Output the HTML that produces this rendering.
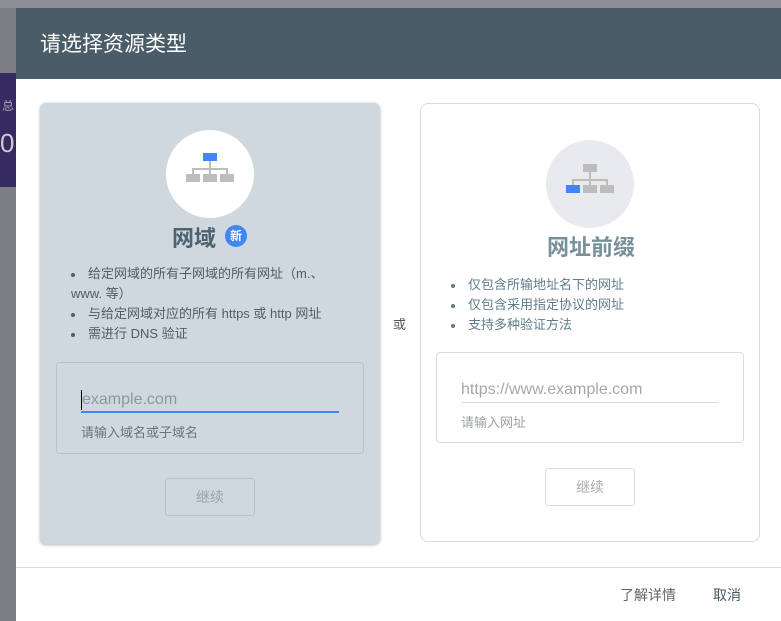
<!DOCTYPE html>
<html><head><meta charset="utf-8"><style>
*{margin:0;padding:0;box-sizing:border-box}
body{width:781px;height:621px;overflow:hidden;background:#7d7f82;font-family:"Liberation Sans","Noto Sans CJK SC",sans-serif;position:relative}
.abs{position:absolute}
.dlg{left:16px;top:8px;width:765px;height:613px;background:#fff}
.hdr{left:0;top:0;width:765px;height:71px;background:#4a5c68;color:#fff;font-size:21px;padding:24px 0 0 24px;line-height:26px}
.card1{left:24px;top:95px;width:340px;height:441px;background:#cfd8de;border-radius:6px;box-shadow:0 1px 3px rgba(0,0,0,.3)}
.card2{left:404px;top:95px;width:340px;height:439px;border:1px solid #dadce0;border-radius:8px}
.circ{width:88px;height:88px;border-radius:50%}
ul{list-style:none}
li{position:relative;font-size:13px;line-height:20px}
li:before{content:"";position:absolute;left:-17px;top:9px;width:4px;height:4px;border-radius:50%;background:currentColor}
.btn{width:90px;height:38px;border:1px solid #b9c1c6;border-radius:3px;text-align:center;line-height:36px;font-size:14px;color:#9aa3a8}
</style></head><body>
<div class="abs" style="left:0;top:0;width:781px;height:8px;background:#8a8f96"></div>
<div class="abs" style="left:0;top:73px;width:16px;height:114px;background:#362a62"></div>
<div class="abs" style="left:2px;top:97px;font-size:12px;color:#aaa">总</div>
<div class="abs" style="left:0;top:128px;font-size:26px;color:#ccc">0</div>
<div class="abs dlg">
 <div class="abs hdr">请选择资源类型</div>
 <div class="abs card1">
  <div class="abs circ" style="left:126px;top:27px;background:#fff">
   <svg width="88" height="88"><rect x="37" y="23" width="14" height="8" fill="#4285f4"/><path d="M44 31v8M27 44v-5h34v5M44 39v5" stroke="#bdbdbd" stroke-width="2" fill="none"/><rect x="20" y="44" width="14" height="8" fill="#bdbdbd"/><rect x="37" y="44" width="14" height="8" fill="#bdbdbd"/><rect x="54" y="44" width="14" height="8" fill="#bdbdbd"/></svg>
  </div>
  <div class="abs" style="left:132px;top:118px;font-size:22px;font-weight:bold;color:#4f6270">网域</div>
  <div class="abs" style="left:185px;top:122px;width:22px;height:22px;border-radius:50%;background:#4285f4;color:#fff;font-size:12px;text-align:center;line-height:22px;font-weight:bold">新</div>
  <ul class="abs" style="left:48px;top:161px;width:270px;color:#4f5d66">
   <li>给定网域的所有子网域的所有网址（m.、<br><span style="margin-left:-17px">www. 等）</span></li>
   <li>与给定网域对应的所有 https 或 http 网址</li>
   <li>需进行 DNS 验证</li>
  </ul>
  <div class="abs" style="left:16px;top:259px;width:308px;height:92px;border:1px solid #b9c1c6;border-radius:4px">
   <div class="abs" style="left:24px;top:27px;font-size:16px;color:#8d979d;border-left:1px solid #000;height:20px;line-height:20px">example.com</div>
   <div class="abs" style="left:24px;top:48px;width:258px;height:2px;background:#4285f4"></div>
   <div class="abs" style="left:24px;top:59px;font-size:13px;color:#6a757b">请输入域名或子域名</div>
  </div>
  <div class="abs btn" style="left:125px;top:375px">继续</div>
 </div>
 <div class="abs" style="left:377px;top:306px;font-size:13px;color:#555">或</div>
 <div class="abs card2">
  <div class="abs circ" style="left:125px;top:36px;background:#e8eaed">
   <svg width="88" height="88"><rect x="37" y="24" width="14" height="8" fill="#bdbdbd"/><path d="M44 32v8M27 45v-5h34v5M44 40v5" stroke="#bdbdbd" stroke-width="2" fill="none"/><rect x="20" y="45" width="14" height="8" fill="#4285f4"/><rect x="37" y="45" width="14" height="8" fill="#bdbdbd"/><rect x="54" y="45" width="14" height="8" fill="#bdbdbd"/></svg>
  </div>
  <div class="abs" style="left:115px;top:126px;width:110px;text-align:center;font-size:22px;font-weight:bold;color:#78909c;white-space:nowrap">网址前缀</div>
  <ul class="abs" style="left:47px;top:171px;color:#5f7d8c">
   <li>仅包含所输地址名下的网址</li>
   <li>仅包含采用指定协议的网址</li>
   <li>支持多种验证方法</li>
  </ul>
  <div class="abs" style="left:15px;top:248px;width:308px;height:91px;border:1px solid #dadce0;border-radius:4px">
   <div class="abs" style="left:24px;top:27px;font-size:16px;color:#a3a8ab;line-height:20px">https://www.example.com</div>
   <div class="abs" style="left:24px;top:49px;width:258px;height:1px;background:#dadce0"></div>
   <div class="abs" style="left:24px;top:59px;font-size:13px;color:#9aa0a3">请输入网址</div>
  </div>
  <div class="abs btn" style="left:124px;top:364px;border-color:#dadce0;color:#a9adb0">继续</div>
 </div>
 <div class="abs" style="left:0;top:559px;width:765px;height:1px;background:#dadce0"></div>
 <div class="abs" style="left:604px;top:577px;font-size:14px;color:#5f6368">了解详情</div>
 <div class="abs" style="left:697px;top:577px;font-size:14px;color:#455a64">取消</div>
</div>
</body></html>
